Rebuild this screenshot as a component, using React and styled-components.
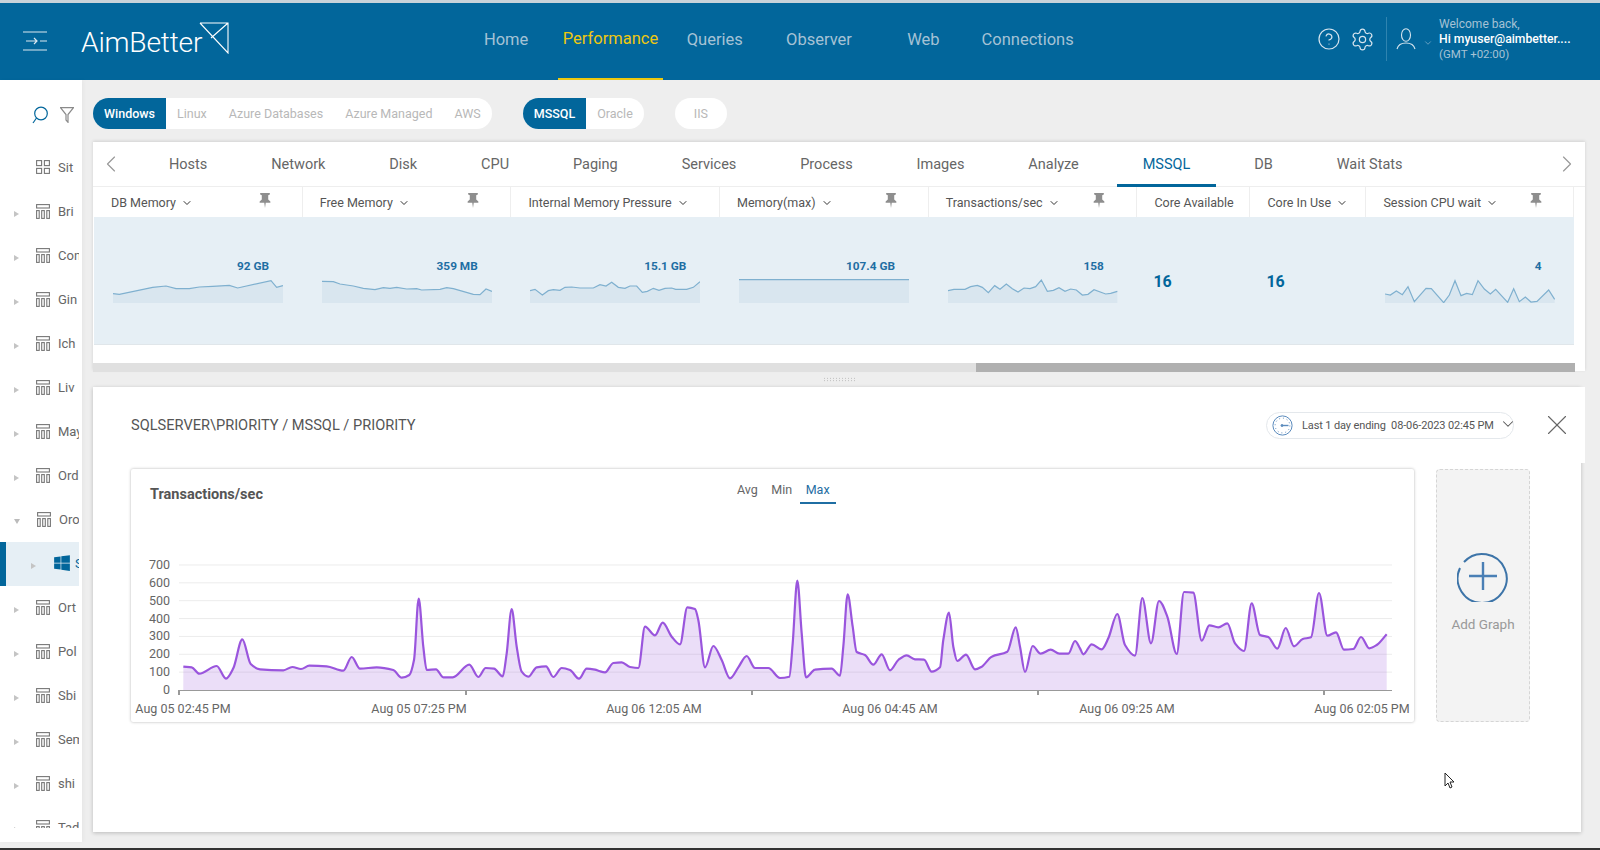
import styled, { createGlobalStyle } from "styled-components";
import { ChevronDown, ChevronLeft, ChevronRight, CircleHelp, Settings, X } from "lucide-react";
import { FaWindows } from "react-icons/fa";

const BLUE = "#02669b";

const GlobalStyle = createGlobalStyle`
  html, body { margin: 0; padding: 0; background: #eee; }
  * { box-sizing: border-box; }
  body { font-family: Roboto, "Liberation Sans", sans-serif; color: #555; }
`;

const Page = styled.div`
  position: relative;
  width: 1600px;
  height: 850px;
  overflow: hidden;
  display: flex;
  flex-direction: column;
  background: #eee;
  border-top: 3px solid #c9d3da;
  border-bottom: 2px solid #333;
`;

/* header */
const Header = styled.header`
  flex: 0 0 77px;
  display: flex;
  align-items: stretch;
  background: ${BLUE};
  color: #fff;
`;
const Brand = styled.div`
  width: 454px;
  display: flex;
  align-items: center;
  padding: 0 0 5px 23px;
  > svg { margin-top: 4px; }
`;
const Logo = styled.div`
  display: flex;
  align-items: center;
  margin: 6px 0 0 34px;
  font-size: 28.2px;
  font-weight: 300;
  letter-spacing: -0.2px;
  svg { margin: -8px 0 0 -3px; }
`;
const Nav = styled.nav`
  display: flex;
`;
const NavItem = styled.a`
  position: relative;
  width: 104.3px;
  display: flex;
  align-items: center;
  justify-content: center;
  padding-bottom: 5px;
  font-size: 16.5px;
  color: ${(p) => (p.$active ? "#eec80f" : "#a5c2d5")};
  ${(p) => p.$active && "border-bottom: 2px solid #eec80f;"}
`;
const Tools = styled.div`
  margin-left: auto;
  display: flex;
  align-items: center;
  padding: 0 29px 5px 0;
  color: #d6e4ee;
`;
const GearWrap = styled.span`
  display: flex;
  margin-left: 9px;
`;
const Divider = styled.span`
  width: 1px;
  height: 44px;
  margin: 0 9px 0 11px;
  background: #2f84b0;
`;
const SmallChevron = styled.span`
  display: flex;
  margin: 7px 6px 0 7px;
  color: #c3d7e4;
`;
const UserText = styled.div`
  width: 132px;
  font-size: 12px;
  line-height: 15px;
  color: #a5c2d5;
  strong { display: block; color: #fff; font-weight: 500; font-size: 12.2px; white-space: nowrap; }
  small { display: block; font-size: 11.5px; }
`;

/* main layout */
const Main = styled.div`
  flex: 1;
  display: flex;
  min-height: 0;
`;
const Sidebar = styled.aside`
  flex: 0 0 82px;
  height: 762px;
  background: #fff;
  box-shadow: 2px 0 4px rgba(0, 0, 0, 0.03);
`;
const SearchRow = styled.div`
  height: 66px;
  display: flex;
  align-items: center;
  gap: 12px;
  padding: 4px 0 0 32px;
`;
const TreeList = styled.div`
  height: 682px;
  overflow: hidden;
`;
const TreeRow = styled.div`
  width: 79px;
  height: 44px;
  display: flex;
  align-items: center;
  overflow: hidden;
  white-space: nowrap;
  font-size: 13px;
  padding-bottom: 2px;
  padding-left: ${(p) => (p.$nested ? 31 : 14)}px;
  color: #666;
  ${(p) => p.$selected && `
    background: #e6eff5;
    box-shadow: inset 6px 0 0 ${BLUE}, inset 1px 0 0 #fff;
    color: ${BLUE};
  `}
`;
const Arrow = styled.span`
  flex: 0 0 5px;
  width: 0;
  height: 0;
  margin: 5px 17px 0 0;
  ${(p) => p.$open
    ? "border-left: 3px solid transparent; border-right: 3px solid transparent; border-top: 5px solid #bbb;"
    : p.$none
      ? ""
      : "border-top: 3px solid transparent; border-bottom: 3px solid transparent; border-left: 5px solid #c4c4c4;"}
`;
const TreeIcon = styled.span`
  flex: 0 0 ${(p) => (p.$os ? 18 : 14)}px;
  display: flex;
  margin-right: ${(p) => (p.$os ? 4 : 8)}px;
  color: ${BLUE};
`;
const Content = styled.main`
  flex: 1;
  min-width: 0;
  padding: 18px 15px 0 11px;
`;

/* filters */
const FilterRow = styled.div`
  display: flex;
  gap: 31px;
  height: 31px;
  margin-bottom: 13px;
`;
const PillGroup = styled.div`
  display: flex;
  border-radius: 16px;
  background: #fff;
  overflow: hidden;
`;
const Pill = styled.span`
  display: flex;
  align-items: center;
  padding: 0 ${(p) => p.$pad || 11}px;
  font-size: 12.5px;
  color: ${(p) => (p.$active ? "#fff" : "#b8b8b8")};
  background: ${(p) => (p.$active ? BLUE : "transparent")};
  font-weight: ${(p) => (p.$active ? 500 : 400)};
`;

/* metric card */
const MetricCard = styled.section`
  height: 229px;
  background: #fff;
  box-shadow: 0 -1px 3px rgba(0, 0, 0, 0.12);
  padding-right: 10px;
`;
const TabBar = styled.div`
  height: 45px;
  margin-right: -10px;
  display: flex;
  align-items: stretch;
  border-bottom: 1px solid #eee;
  padding: 0 4px;
  color: #999;
`;
const TabArrow = styled.span`
  display: flex;
  align-items: center;
`;
const TabList = styled.div`
  flex: 1;
  display: flex;
  gap: 11.9px;
  padding-left: 18px;
`;
const Tab = styled.a`
  display: flex;
  align-items: center;
  padding: 3px 26px 0;
  font-size: 14.5px;
  color: ${(p) => (p.$active ? BLUE : "#666")};
  border-bottom: 3px solid ${(p) => (p.$active ? BLUE : "transparent")};
  height: 45px;
`;
const Columns = styled.div`
  display: flex;
  margin-left: 1px;
`;
const Column = styled.div`
  flex: 0 0 ${(p) => p.$w}px;
`;
const ColumnHead = styled.div`
  height: 30px;
  display: flex;
  align-items: center;
  padding: 1px 0 0 17px;
  font-size: 12.5px;
  color: #555;
  border-right: 1px solid #eee;
  white-space: nowrap;
  svg.chev { margin-left: 5px; color: #333; }
`;
const PinWrap = styled.span`
  margin-left: auto;
  margin-right: 31px;
  display: flex;
  margin-top: -4px;
`;
const ColumnBody = styled.div`
  height: 128px;
  background: #e6eff5;
  border-bottom: 1px solid #e0e6ea;
  padding: 42px 0 0 19px;
`;
const MetricValue = styled.div`
  width: 156px;
  height: 14px;
  line-height: 14px;
  font-size: 11.8px;
  font-weight: 700;
  text-align: right;
  color: #1f6ea3;
  margin-bottom: 2px;
`;
const CoreValue = styled.div`
  margin: 13px 0 0 -3px;
  font-size: 16px;
  font-weight: 700;
  line-height: 20px;
  color: ${BLUE};
`;
const Track = styled.div`
  height: 9px;
  margin: 18px 0 0 0;
  background: #e0e0e0;
  display: flex;
  justify-content: flex-end;
`;
const Thumb = styled.div`
  width: 599px;
  background: #b0b0b0;
`;
const Splitter = styled.div`
  height: 16px;
  display: flex;
  align-items: center;
  justify-content: center;
`;
const Grip = styled.div`
  width: 32px;
  height: 5px;
  background-image: radial-gradient(#b5b5b5 0.8px, transparent 1px);
  background-size: 3px 2.5px;
`;

/* detail panel */
const Panel = styled.section`
  width: 1488px;
  height: 445px;
  background: #fff;
  box-shadow: 0 1px 4px rgba(0, 0, 0, 0.22);
`;
const PanelHead = styled.div`
  height: 76px;
  margin-right: -4px;
  background: #fff;
  display: flex;
  align-items: center;
  padding: 0 11px 0 38px;
  margin-bottom: 6px;
`;
const PanelTitle = styled.h2`
  margin: 0;
  font-size: 14.6px;
  font-weight: 400;
  color: #555;
`;
const RangePill = styled.div`
  margin-left: auto;
  width: 248px;
  height: 27px;
  display: flex;
  align-items: center;
  gap: 9px;
  padding: 0 6px 0 5px;
  border: 1px solid #e4e8ec;
  border-radius: 14px;
  font-size: 11px;
  letter-spacing: -0.12px;
  color: #555;
  white-space: nowrap;
  svg { flex: 0 0 auto; }
  .chev { margin-left: -4px; margin-top: -3px; }
`;
const CloseButton = styled.span`
  display: flex;
  margin-left: 26px;
  color: #666;
`;
const PanelBody = styled.div`
  display: flex;
  gap: 22px;
  padding-left: 38px;
`;
const ChartCard = styled.div`
  width: 1283px;
  height: 253px;
  border-radius: 2px;
  box-shadow: 0 0 3px rgba(0, 0, 0, 0.3);
  background: #fff;
  svg { display: block; }
`;
const ChartHead = styled.div`
  height: 41px;
  display: grid;
  grid-template-columns: 581px auto;
  padding: 0 0 0 19px;
`;
const ChartTitle = styled.div`
  font-size: 14.5px;
  font-weight: 700;
  color: #555;
  padding-top: 17px;
`;
const ModeTabs = styled.div`
  display: flex;
  gap: 1.5px;
  padding-top: 9px;
`;
const ModeTab = styled.span`
  height: 26px;
  padding: 4px 6px 0;
  font-size: 12.5px;
  color: ${(p) => (p.$active ? "#1f6ea3" : "#666")};
  border-bottom: 2px solid ${(p) => (p.$active ? "#1f6ea3" : "transparent")};
`;
const AddCard = styled.div`
  width: 94px;
  height: 253px;
  display: flex;
  flex-direction: column;
  align-items: center;
  padding-top: 80px;
  gap: 14px;
  background: #f3f3f3;
  border: 1px dashed #d5d5d5;
  border-radius: 4px;
  font-size: 13.5px;
  color: #999;
`;
const AxisText = styled.text`
  font-family: Roboto, "Liberation Sans", sans-serif;
  font-size: 12.5px;
  fill: #666;
`;
const Cursor = styled.svg`
  position: absolute;
  left: 1444px;
  top: 769px;
`;

/* drawings */
const Burger = () => (
  <svg width="24" height="20" viewBox="0 0 24 20" fill="none" stroke="#dbe8f0" strokeWidth="1.2">
    <path d="M0 1h24M0 19h24M3 10h11M11 7l3 3-3 3M17 10h7" />
  </svg>
);
const LogoMark = () => (
  <svg width="30" height="32" viewBox="0 0 30 32" fill="none" stroke="#fff" strokeWidth="1.1">
    <path d="M1 1h28v30L1 1M29 1L12 16" />
  </svg>
);
const UserIcon = () => (
  <svg width="20" height="22" viewBox="0 0 20 22" fill="none" stroke="#d6e4ee" strokeWidth="1.1">
    <ellipse cx="10" cy="7" rx="4.5" ry="6.3" />
    <path d="M1 21c1-4 5-6 9-6s8 2 9 6" />
  </svg>
);
const SearchIcon = () => (
  <svg width="16" height="18" viewBox="0 0 16 18" fill="none" stroke={BLUE} strokeWidth="1.2">
    <circle cx="9" cy="7.5" r="6.3" />
    <path d="M4.5 12L1 17" />
  </svg>
);
const FilterIcon = () => (
  <svg width="14" height="16" viewBox="0 0 14 16" fill="none" stroke="#8a8a8a" strokeWidth="1.2">
    <path d="M0.5 0.7h13L8 7.5V15.3L6 13V7.5z" />
  </svg>
);
const GridIcon = () => (
  <svg width="14" height="14" viewBox="0 0 14 14" fill="none" stroke="#777" strokeWidth="1.1">
    <rect x="0.6" y="0.6" width="5" height="5" />
    <rect x="8.4" y="0.6" width="5" height="5" />
    <rect x="0.6" y="8.4" width="5" height="5" />
    <rect x="8.4" y="8.4" width="5" height="5" />
  </svg>
);
const ServerIcon = () => (
  <svg width="14" height="15" viewBox="0 0 14 15" fill="none" stroke="#777" strokeWidth="1.1">
    <rect x="0.6" y="0.6" width="12.8" height="3.4" />
    <rect x="0.6" y="6.6" width="2.6" height="7.8" />
    <rect x="5.7" y="6.6" width="2.6" height="7.8" />
    <rect x="10.8" y="6.6" width="2.6" height="7.8" />
  </svg>
);
const PinIcon = () => (
  <svg width="12" height="15" viewBox="0 0 11 14" fill="#8e8e8e">
    <path d="M1 0h9v1.4L8.5 2.2V6l2 2v1.2H6.2L5.5 14l-.7-4.8H.5V8l2-2V2.2L1 1.4z" />
  </svg>
);
const ClockIcon = () => (
  <svg width="21" height="21" viewBox="0 0 21 21" fill="none" stroke="#5b8bbd">
    <circle cx="10.5" cy="10.5" r="9.6" strokeWidth="1" />
    <circle cx="10.5" cy="10.5" r="7.4" strokeWidth="1" strokeDasharray="1 2.9" />
    <path d="M10.5 10.5h6" strokeWidth="1.4" />
    <circle cx="10" cy="10.5" r="1" fill="#5b8bbd" />
  </svg>
);
const PlusCircle = () => (
  <svg width="52" height="52" viewBox="0 0 52 52" fill="none" stroke="#3d74a8" strokeWidth="2">
    <path d="M7 12A24.5 24.5 0 1 1 3 18" />
    <path d="M12 26h28M26 12v28" strokeWidth="2.4" stroke="#4a7fb5" />
  </svg>
);

/* sparklines are kept in a 170x40 box, the top 12px is left for the value */
const Spark = ({ points }) => {
  const line = points.map(([x, y]) => `${x},${y}`).join(" ");
  const first = points[0][0];
  const last = points[points.length - 1][0];
  return (
    <svg width="170" height="28" viewBox="0 12 170 28" style={{ display: "block" }}>
      <polygon points={`${first},40 ${line} ${last},40`} fill="#d9e6ef" />
      <polyline points={line} fill="none" stroke="#7fb0cf" strokeWidth="1.2" />
    </svg>
  );
};

const fromZoom = (raw, x0, y0) => raw.map(([x, y]) => [(x - x0) / 3, y / 3 + y0]);

const metrics = [
  { name: "DB Memory", w: 208.7, pin: true, value: "92 GB", spark: fromZoom([[71,341],[90,343],[190,322],[230,318],[260,326],[300,326],[330,321],[370,319],[420,316],[445,324],[545,302],[562,322],[581,317]], 71, -83) },
  { name: "Free Memory", w: 208.7, pin: true, value: "359 MB", spark: fromZoom([[696,304],[730,305],[750,312],[790,318],[820,325],[855,329],[880,323],[900,325],[920,322],[950,327],[980,326],[995,330],[1050,328],[1070,323],[1090,326],[1150,343],[1170,344],[1188,327],[1206,334]], 696, -83) },
  { name: "Internal Memory Pressure", w: 208.7, pin: false, value: "15.1 GB", spark: fromZoom([[60,122],[75,118],[97,135],[115,122],[130,119],[150,121],[165,112],[185,111],[210,114],[250,114],[270,104],[288,108],[305,97],[325,112],[345,115],[360,108],[380,108],[397,127],[412,124],[430,115],[447,121],[465,115],[485,114],[497,118],[530,118],[550,112],[570,95]], 60, -13) },
  { name: "Memory(max)", w: 208.7, pin: true, value: "107.4 GB", spark: [[0,16.7],[170,16.7]] },
  { name: "Transactions/sec", w: 208.7, pin: true, value: "158", spark: fromZoom([[52,122],[70,118],[103,118],[120,110],[140,106],[155,112],[173,128],[192,107],[208,118],[227,102],[245,116],[262,126],[280,114],[298,116],[315,110],[332,90],[350,124],[368,121],[385,113],[403,124],[420,117],[437,120],[455,135],[472,133],[490,119],[525,132],[540,130],[560,124]], 52, -13) },
  { name: "Core Available", w: 113, core: "16", noChevron: true },
  { name: "Core In Use", w: 116, core: "16" },
  { name: "Session CPU wait", w: 207.5, pin: true, value: "4", spark: fromZoom([[44,132],[60,135],[78,123],[96,134],[113,110],[132,155],[167,115],[183,116],[220,158],[237,135],[254,92],[272,137],[289,130],[306,134],[323,92],[342,117],[360,132],[376,118],[412,157],[430,116],[447,155],[465,141],[482,156],[500,154],[535,120],[553,148]], 44, -13) },
];

const tabs = ["Hosts", "Network", "Disk", "CPU", "Paging", "Services", "Process", "Images", "Analyze", "MSSQL", "DB", "Wait Stats"];
const navItems = ["Home", "Performance", "Queries", "Observer", "Web", "Connections"];
const sites = ["Bri", "Con", "Gin", "Ich", "Liv", "May", "Ord"];
const sitesAfter = ["Ort", "Pol", "Sbi", "Sem", "shi", "Tad"];

/* chart data: x,y read in 3x crops at three offsets */
const crop = (raw, ox, oy) => raw.map(([x, y]) => [ox + x / 3, oy + y / 3]);
const chartPoints = [
  ...crop([[190,620],[215,622],[238,641],[290,618],[318,656],[340,625],[367,538],[392,612],[420,628],[490,631],[517,621],[543,627],[568,617],[620,619],[670,632],[695,591],[720,626],[770,622],[820,630],[845,653],[868,645],[882,600],[896,416],[910,560],[920,630],[948,628],[970,652],[998,652],[1048,614],[1075,651],[1097,624],[1122,626],[1148,649],[1160,580],[1175,447],[1190,560],[1205,635],[1225,650],[1250,622],[1278,619],[1300,651],[1325,624],[1350,630],[1377,656],[1400,626],[1425,629]], 120, 460),
  ...crop([[0,634],[15,637],[40,609],[65,607],[90,621],[115,624],[135,500],[165,526],[188,488],[215,530],[240,553],[262,442],[285,447],[295,480],[315,622],[340,558],[365,600],[390,655],[415,622],[440,588],[465,624],[505,624],[540,654],[568,650],[578,550],[592,362],[605,520],[618,652],[645,629],[695,626],[720,647],[730,560],[743,403],[758,500],[770,576],[795,585],[820,614],[845,583],[870,631],[895,600],[920,586],[945,598],[972,599],[995,635],[1020,622],[1030,540],[1047,458],[1060,560],[1072,603],[1098,584],[1125,628],[1145,620],[1175,590],[1222,575],[1247,502],[1260,560],[1275,636],[1298,558],[1322,581],[1352,569],[1378,581],[1405,581],[1425,543]], 600, 460),
  ...crop([[0,775],[10,793],[35,763],[65,778],[85,745],[112,672],[135,765],[165,797],[187,624],[213,760],[237,633],[262,680],[290,792],[312,606],[340,608],[365,752],[388,706],[415,712],[442,700],[465,760],[492,783],[515,640],[540,735],[565,741],[592,776],[617,714],[642,769],[668,747],[693,742],[717,609],[742,737],[768,727],[792,779],[820,777],[843,741],[868,775],[890,765],[920,733]], 1080, 390),
];

// monotone curve, keeps the flat tops of the chart lib and never overshoots
const smoothPath = (pts) => {
  const slopes = pts.slice(1).map((p, i) => (p[1] - pts[i][1]) / (p[0] - pts[i][0]));
  const tangents = pts.map((_, i) => {
    if (i === 0) return slopes[0];
    if (i === pts.length - 1) return slopes[i - 1];
    const a = slopes[i - 1];
    const b = slopes[i];
    return a * b <= 0 ? 0 : (2 * a * b) / (a + b);
  });
  let d = `M${pts[0][0]} ${pts[0][1]}`;
  for (let i = 0; i < pts.length - 1; i++) {
    const [x1, y1] = pts[i];
    const [x2, y2] = pts[i + 1];
    const h = (x2 - x1) / 3;
    d += ` C${(x1 + h).toFixed(1)} ${(y1 + tangents[i] * h).toFixed(1)} ${(x2 - h).toFixed(1)} ${(y2 - tangents[i + 1] * h).toFixed(1)} ${x2.toFixed(1)} ${y2.toFixed(1)}`;
  }
  return d;
};

const chartLine = smoothPath(chartPoints);
const chartArea = `${chartLine} L1386.7 690 L183.3 690 Z`;

const yLabels = [700, 600, 500, 400, 300, 200, 100, 0];
const xLabels = [
  [183, "Aug 05 02:45 PM"],
  [419, "Aug 05 07:25 PM"],
  [654, "Aug 06 12:05 AM"],
  [890, "Aug 06 04:45 AM"],
  [1127, "Aug 06 09:25 AM"],
  [1362, "Aug 06 02:05 PM"],
];
const ticks = [179, 466, 752, 1038, 1324];

const Chart = () => (
  <svg width="1283" height="212" viewBox="131 510 1283 212">
    {yLabels.map((v) => {
      const y = 690 - v * 0.1786;
      return (
        <g key={v}>
          {v > 0 && <line x1="179" x2="1392" y1={y} y2={y} stroke="#ececec" />}
          <AxisText x="170" y={y + 4} textAnchor="end">{v}</AxisText>
        </g>
      );
    })}
    <path d={chartArea} fill="rgba(155, 89, 220, 0.2)" />
    <path d={chartLine} fill="none" stroke="#9a55dd" strokeWidth="2.2" />
    <line x1="179" x2="1392" y1="690.5" y2="690.5" stroke="#999" />
    {ticks.map((x) => (
      <line key={x} x1={x} x2={x} y1="690" y2="695" stroke="#999" strokeWidth="2" />
    ))}
    {xLabels.map(([x, label]) => (
      <AxisText key={label} x={x} y="713" textAnchor="middle">{label}</AxisText>
    ))}
  </svg>
);

const MetricColumn = ({ m }) => (
  <Column $w={m.w}>
    <ColumnHead>
      {m.name}
      {!m.noChevron && <ChevronDown className="chev" size={12} strokeWidth={2} />}
      {m.pin && <PinWrap><PinIcon /></PinWrap>}
    </ColumnHead>
    <ColumnBody>
      {m.core ? (
        <CoreValue>{m.core}</CoreValue>
      ) : (
        <>
          <MetricValue>{m.value}</MetricValue>
          <Spark points={m.spark} />
        </>
      )}
    </ColumnBody>
  </Column>
);

const SiteRow = ({ name, open }) => (
  <TreeRow>
    <Arrow $open={open} />
    <TreeIcon><ServerIcon /></TreeIcon>
    {name}
  </TreeRow>
);

function App() {
  return (
    <Page>
      <GlobalStyle />
      <Header>
        <Brand>
          <Burger />
          <Logo>AimBetter<LogoMark /></Logo>
        </Brand>
        <Nav>
          {navItems.map((item) => (
            <NavItem key={item} $active={item === "Performance"}>{item}</NavItem>
          ))}
        </Nav>
        <Tools>
          <CircleHelp size={24} strokeWidth={1.2} />
          <GearWrap><Settings size={25} strokeWidth={1.15} /></GearWrap>
          <Divider />
          <UserIcon />
          <SmallChevron><ChevronDown size={10} strokeWidth={1.2} /></SmallChevron>
          <UserText>
            Welcome back,
            <strong>Hi myuser@aimbetter....</strong>
            <small>(GMT +02:00)</small>
          </UserText>
        </Tools>
      </Header>
      <Main>
        <Sidebar>
          <SearchRow>
            <SearchIcon />
            <FilterIcon />
          </SearchRow>
          <TreeList>
            <TreeRow>
              <Arrow $none />
              <TreeIcon><GridIcon /></TreeIcon>
              Sit
            </TreeRow>
            {sites.map((s) => <SiteRow key={s} name={s} />)}
            <SiteRow name="Oro" open />
            <TreeRow $selected $nested>
              <Arrow />
              <TreeIcon $os><FaWindows size={18} /></TreeIcon>
              S
            </TreeRow>
            {sitesAfter.map((s) => <SiteRow key={s} name={s} />)}
          </TreeList>
        </Sidebar>
        <Content>
          <FilterRow>
            <PillGroup>
              <Pill $active>Windows</Pill>
              <Pill>Linux</Pill>
              <Pill>Azure Databases</Pill>
              <Pill>Azure Managed</Pill>
              <Pill>AWS</Pill>
            </PillGroup>
            <PillGroup>
              <Pill $active>MSSQL</Pill>
              <Pill>Oracle</Pill>
            </PillGroup>
            <PillGroup>
              <Pill $pad={19}>IIS</Pill>
            </PillGroup>
          </FilterRow>
          <MetricCard>
            <TabBar>
              <TabArrow><ChevronLeft size={28} strokeWidth={1} /></TabArrow>
              <TabList>
                {tabs.map((t) => <Tab key={t} $active={t === "MSSQL"}>{t}</Tab>)}
              </TabList>
              <TabArrow><ChevronRight size={28} strokeWidth={1} /></TabArrow>
            </TabBar>
            <Columns>
              {metrics.map((m) => <MetricColumn key={m.name} m={m} />)}
            </Columns>
            <Track><Thumb /></Track>
          </MetricCard>
          <Splitter><Grip /></Splitter>
          <Panel>
            <PanelHead>
              <PanelTitle>SQLSERVER\PRIORITY / MSSQL / PRIORITY</PanelTitle>
              <RangePill>
                <ClockIcon />
                <span>Last 1 day ending&nbsp; 08-06-2023 02:45 PM</span>
                <ChevronDown className="chev" size={18} strokeWidth={1.4} />
              </RangePill>
              <CloseButton><X size={34} strokeWidth={0.8} /></CloseButton>
            </PanelHead>
            <PanelBody>
              <ChartCard>
                <ChartHead>
                  <ChartTitle>Transactions/sec</ChartTitle>
                  <ModeTabs>
                    <ModeTab>Avg</ModeTab>
                    <ModeTab>Min</ModeTab>
                    <ModeTab $active>Max</ModeTab>
                  </ModeTabs>
                </ChartHead>
                <Chart />
              </ChartCard>
              <AddCard>
                <PlusCircle />
                Add Graph
              </AddCard>
            </PanelBody>
          </Panel>
        </Content>
      </Main>
      <Cursor width="11" height="18" viewBox="0 0 11 18">
        <path d="M1 1v13l3-3 2 5 2-1-2-5h4z" fill="#fff" stroke="#222" strokeWidth="1" />
      </Cursor>
    </Page>
  );
}

export default App;
